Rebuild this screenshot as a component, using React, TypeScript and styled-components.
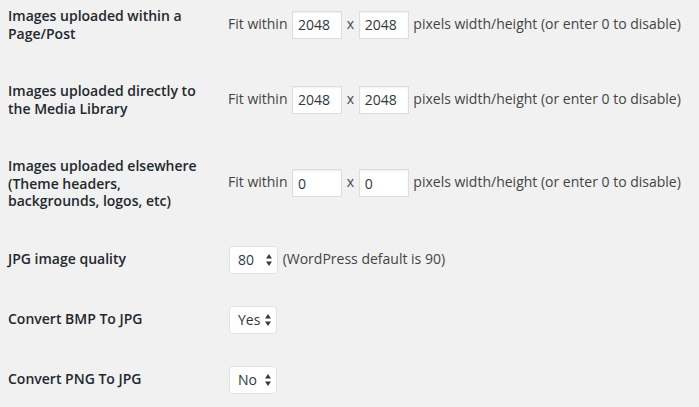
import React from "react";
import styled, { createGlobalStyle } from "styled-components";

const GlobalStyle = createGlobalStyle`
  html, body {
    margin: 0;
    padding: 0;
    background: #f1f1f1;
  }
  body {
    font-family: "Open Sans", "Liberation Sans", sans-serif;
    font-size: 14px;
    color: #444;
    overflow: hidden;
  }
`;

const Form = styled.div`
  display: flex;
  flex-direction: column;
  padding-left: 8px;
  margin-top: -13px;
`;

const Row = styled.div`
  display: grid;
  grid-template-columns: 210px 1fr;
`;

const Label = styled.div`
  align-self: start;
  padding: 20px 10px 20px 0;
  width: 200px;
  line-height: 17.5px;
  font-weight: 600;
  color: #23282d;
`;

const Field = styled.div`
  align-self: center;
  padding: 15px 10px;
  line-height: 18px;
  color: #444;
  white-space: nowrap;
`;

const NumInput = styled.input`
  box-sizing: border-box;
  display: inline-block;
  vertical-align: middle;
  width: 50px;
  height: 28px;
  margin: 1px;
  padding: 3px 5px;
  border: 1px solid #ddd;
  background: #fff;
  box-shadow: inset 0 1px 2px rgba(0, 0, 0, 0.07);
  font-family: inherit;
  font-size: 14px;
  color: #32373c;
  outline: none;
`;

const SelectBox = styled.div<{ $w: number }>`
  box-sizing: border-box;
  display: inline-flex;
  vertical-align: middle;
  align-items: center;
  justify-content: space-between;
  width: ${(p) => p.$w}px;
  height: 28px;
  margin: 1px;
  padding: 0 5px 0 8px;
  border: 1px solid #e2e2e2;
  border-radius: 4px;
  background: #fff;
  color: #32373c;
  font-size: 14px;
`;

const Arrows = () => (
  <svg width="6" height="12" viewBox="0 0 6 12" aria-hidden="true">
    <path d="M3 0 L6 4.6 H0 Z M0 7.4 H6 L3 12 Z" fill="#3a3a3a" />
  </svg>
);

const Select = ({ value, width }: { value: string; width: number }) => (
  <SelectBox $w={width} role="combobox">
    <span>{value}</span>
    <Arrows />
  </SelectBox>
);

const SizeField = ({ w, h }: { w: string; h: string }) => (
  <Field>
    Fit within <NumInput defaultValue={w} /> x <NumInput defaultValue={h} /> pixels
    width/height (or enter 0 to disable)
  </Field>
);

export default function App() {
  return (
    <>
      <GlobalStyle />
      <Form>
        <Row>
          <Label>Images uploaded within a Page/Post</Label>
          <SizeField w="2048" h="2048" />
        </Row>
        <Row>
          <Label>Images uploaded directly to the Media Library</Label>
          <SizeField w="2048" h="2048" />
        </Row>
        <Row>
          <Label>Images uploaded elsewhere (Theme headers, backgrounds, logos, etc)</Label>
          <SizeField w="0" h="0" />
        </Row>
        <Row>
          <Label>JPG image quality</Label>
          <Field>
            <Select value="80" width={49} /> (WordPress default is 90)
          </Field>
        </Row>
        <Row>
          <Label>Convert BMP To JPG</Label>
          <Field>
            <Select value="Yes" width={48} />
          </Field>
        </Row>
        <Row>
          <Label>Convert PNG To JPG</Label>
          <Field>
            <Select value="No" width={48} />
          </Field>
        </Row>
      </Form>
    </>
  );
}
